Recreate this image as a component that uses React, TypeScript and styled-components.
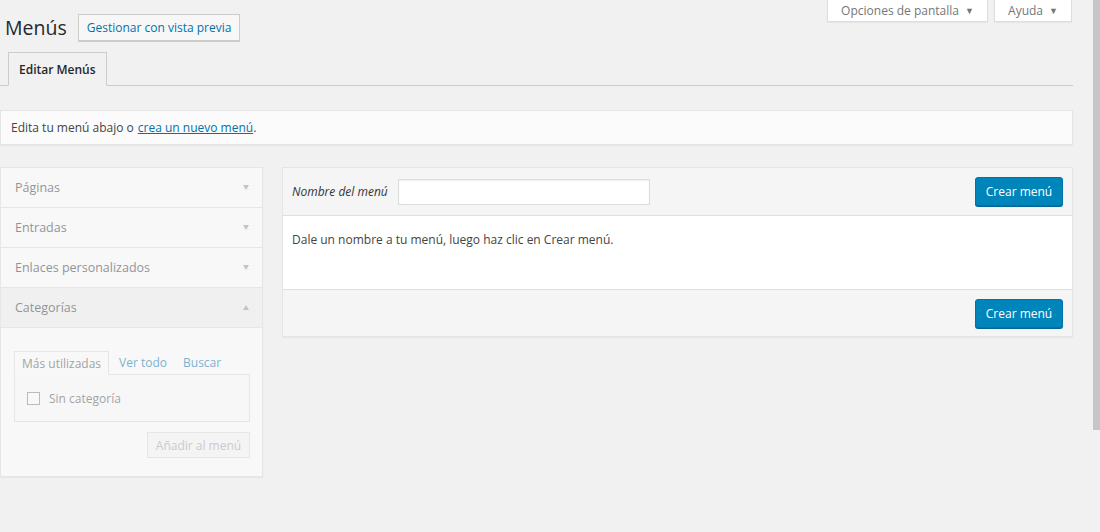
import * as React from 'react';
import styled, { createGlobalStyle } from 'styled-components';

const GlobalStyle = createGlobalStyle`
	body {
		margin: 0;
		background: #f1f1f1;
		font-family: "Open Sans", "Noto Sans", sans-serif;
		font-size: 12px;
		color: #444;
	}
	* { box-sizing: border-box; }
`;

const Page = styled.div`
	display: flex;
	width: 1100px;
	height: 532px;
	overflow: hidden;
`;

const Main = styled.div`
	flex: 1;
	padding-right: 17px;
`;

const Scrollbar = styled.div`
	width: 10px;
	background: #f1f1f1;
	display: flex;
	justify-content: flex-end;
`;

const Thumb = styled.div`
	width: 7px;
	height: 430px;
	background: #c6c6c6;
`;

const Header = styled.div`
	display: flex;
	justify-content: space-between;
	align-items: flex-start;
	padding-left: 5px;
`;

const TitleGroup = styled.div`
	display: flex;
	align-items: center;
	gap: 11px;
	margin-top: 14px;
`;

const Title = styled.h1`
	margin: 0;
	font-size: 19.5px;
	font-weight: 400;
	color: #23282d;
	line-height: 27px;
`;

const PageButton = styled.a`
	display: inline-flex;
	align-items: center;
	height: 27px;
	padding: 0 8px;
	border: 1px solid #ccc;
	background: #f7f7f7;
	color: #0073aa;
	font-size: 12px;
	box-shadow: 0 1px 0 #ccc;
`;

const ScreenMeta = styled.div`
	display: flex;
	gap: 6px;
	margin-right: 1px;
`;

const MetaTab = styled.div<{ $w: number }>`
	width: ${p => p.$w}px;
	height: 22px;
	background: #fff;
	border: 1px solid #ddd;
	border-top: none;
	color: #72777c;
	font-size: 12px;
	display: flex;
	align-items: center;
	justify-content: center;
	gap: 6px;
	box-shadow: 0 1px 1px rgba(0, 0, 0, 0.04);
`;

const Caret = styled.span`
	font-size: 9px;
	color: #72777c;
`;

const NavTabs = styled.div`
	display: flex;
	margin-top: 11px;
	padding-left: 8px;
	border-bottom: 1px solid #ccc;
`;

const NavTab = styled.div`
	height: 34px;
	margin-bottom: -1px;
	padding: 0 10px;
	display: flex;
	align-items: center;
	border: 1px solid #ccc;
	border-bottom: 1px solid #f1f1f1;
	background: #f1f1f1;
	color: #23282d;
	font-size: 12px;
	font-weight: 600;
`;

const Notice = styled.div`
	margin-top: 24px;
	height: 35px;
	padding: 0 10px;
	display: flex;
	align-items: center;
	background: #fbfbfb;
	border: 1px solid #e5e5e5;
	box-shadow: 0 1px 1px rgba(0, 0, 0, 0.04);
	color: #444;
	a { color: #0073aa; margin-left: 4px; }
`;

const Columns = styled.div`
	display: grid;
	grid-template-columns: 263px 1fr;
	gap: 19px;
	margin-top: 22px;
	align-items: start;
`;

const Sidebar = styled.div`
	opacity: 0.5;
	background: #fff;
	border: 1px solid #ddd;
	box-shadow: 0 1px 1px rgba(0, 0, 0, 0.08);
`;

const SectionTitle = styled.div<{ $open?: boolean }>`
	height: 40px;
	padding: 0 14px;
	display: flex;
	align-items: center;
	justify-content: space-between;
	border-bottom: 1px solid #ddd;
	background: ${p => (p.$open ? '#f0f0f0' : '#fff')};
	color: #32373c;
	font-size: 12.5px;
`;

const Arrow = styled.span<{ $up?: boolean }>`
	width: 0;
	height: 0;
	margin-right: -1px;
	border-left: 3.5px solid transparent;
	border-right: 3.5px solid transparent;
	${p =>
		p.$up
			? 'border-bottom: 5px solid #999;'
			: 'border-top: 5px solid #999;'}
`;

const SectionBody = styled.div`
	padding: 23px 12px 18px 13px;
`;

const MiniTabs = styled.div`
	display: flex;
	align-items: flex-end;
	gap: 10px;
`;

const MiniTab = styled.span<{ $active?: boolean }>`
	height: 24px;
	display: flex;
	align-items: center;
	margin-bottom: -1px;
	${p =>
		p.$active
			? `padding: 0 7px; border: 1px solid #ddd; border-bottom: 1px solid #fff; background: #fff; color: #555;`
			: 'color: #0073aa; padding-bottom: 1px; margin-right: 6px;'}
`;

const TabPanel = styled.div`
	height: 48px;
	padding: 0 12px;
	border: 1px solid #ddd;
	background: #fdfdfd;
	display: flex;
	align-items: center;
	gap: 9px;
	color: #555;
`;

const Check = styled.span`
	width: 13px;
	height: 13px;
	border: 1px solid #7e8993;
	background: #fff;
`;

const AddRow = styled.div`
	display: flex;
	justify-content: flex-end;
	margin-top: 10px;
`;

const GhostButton = styled.span`
	height: 26px;
	width: 103px;
	display: flex;
	align-items: center;
	justify-content: center;
	border: 1px solid #ddd;
	background: #f7f7f7;
	color: #a0a5aa;
`;

const Panel = styled.div`
	background: #fff;
	border: 1px solid #e5e5e5;
	box-shadow: 0 1px 1px rgba(0, 0, 0, 0.04);
`;

const PanelBar = styled.div<{ $top?: boolean }>`
	height: ${p => (p.$top ? 48 : 47)}px;
	padding: 0 9px;
	display: flex;
	align-items: center;
	background: #f5f5f5;
	${p => (p.$top ? 'border-bottom: 1px solid #dfdfdf;' : 'border-top: 1px solid #dfdfdf;')}
`;

const Label = styled.label`
	font-style: italic;
	color: #32373c;
	margin-right: 10px;
`;

const Input = styled.div`
	width: 252px;
	height: 26px;
	background: #fff;
	border: 1px solid #ddd;
	box-shadow: inset 0 1px 2px rgba(0, 0, 0, 0.07);
`;

const PrimaryButton = styled.button`
	margin-left: auto;
	height: 29px;
	width: 88px;
	border: 1px solid #0073aa;
	border-radius: 3px;
	background: #0085ba;
	color: #fff;
	font-family: inherit;
	font-size: 12px;
	box-shadow: 0 1px 0 #006799;
`;

const PanelBody = styled.div`
	height: 73px;
	padding: 15px 9px 0;
	color: #444;
`;

const App = () => {
	const sections = ['Páginas', 'Entradas', 'Enlaces personalizados'];

	return (
		<>
			<GlobalStyle />
			<Page>
				<Main>
					<Header>
						<TitleGroup>
							<Title>Menús</Title>
							<PageButton>Gestionar con vista previa</PageButton>
						</TitleGroup>
						<ScreenMeta>
							<MetaTab $w={161}>
								Opciones de pantalla <Caret>▼</Caret>
							</MetaTab>
							<MetaTab $w={78}>
								Ayuda <Caret>▼</Caret>
							</MetaTab>
						</ScreenMeta>
					</Header>

					<NavTabs>
						<NavTab>Editar Menús</NavTab>
					</NavTabs>

					<Notice>
						Edita tu menú abajo o <a href="#">crea un nuevo menú</a>.
					</Notice>

					<Columns>
						<Sidebar>
							{sections.map(s => (
								<SectionTitle key={s}>
									{s}
									<Arrow />
								</SectionTitle>
							))}
							<SectionTitle $open>
								Categorías
								<Arrow $up />
							</SectionTitle>
							<SectionBody>
								<MiniTabs>
									<MiniTab $active>Más utilizadas</MiniTab>
									<MiniTab>Ver todo</MiniTab>
									<MiniTab>Buscar</MiniTab>
								</MiniTabs>
								<TabPanel>
									<Check />
									Sin categoría
								</TabPanel>
								<AddRow>
									<GhostButton>Añadir al menú</GhostButton>
								</AddRow>
							</SectionBody>
						</Sidebar>

						<Panel>
							<PanelBar $top>
								<Label>Nombre del menú</Label>
								<Input />
								<PrimaryButton>Crear menú</PrimaryButton>
							</PanelBar>
							<PanelBody>
								Dale un nombre a tu menú, luego haz clic en Crear menú.
							</PanelBody>
							<PanelBar>
								<PrimaryButton>Crear menú</PrimaryButton>
							</PanelBar>
						</Panel>
					</Columns>
				</Main>
				<Scrollbar>
					<Thumb />
				</Scrollbar>
			</Page>
		</>
	);
};

export default App;
